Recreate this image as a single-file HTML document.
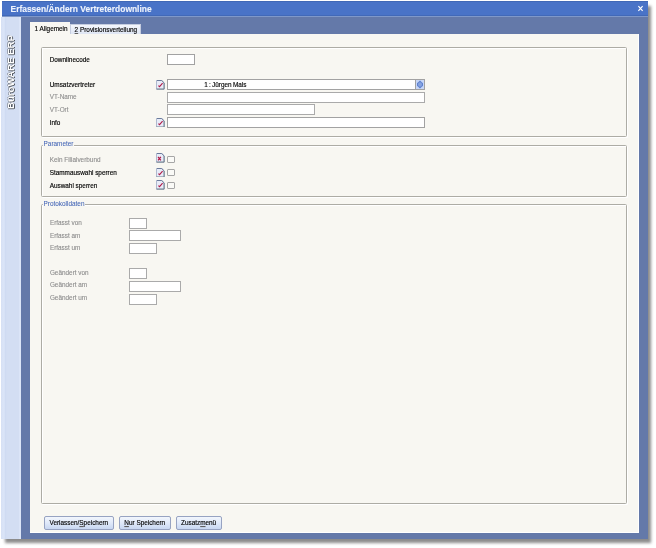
<!DOCTYPE html>
<html><head><meta charset="utf-8">
<style>
*{margin:0;padding:0;box-sizing:border-box}
html,body{width:656px;height:548px;overflow:hidden;background:#fff;position:relative}
body{font-family:"Liberation Sans",sans-serif}
#root{position:absolute;left:0;top:0;width:656px;height:548px;background:#fff;filter:blur(0.42px)}
.a{position:absolute}
.t{position:absolute;font-size:6.4px;line-height:6.4px;white-space:nowrap;color:#000;-webkit-text-stroke:0.14px currentColor;transform:scaleY(1.07);transform-origin:0 5.42px}
.g{color:#8c8c8c;-webkit-text-stroke:0.1px currentColor}
.shadow{position:absolute;left:4.5px;top:5.5px;width:646px;height:537px;background:#8c8c8c;filter:blur(1.5px)}
.win{position:absolute;left:2px;top:1.4px;width:645.6px;height:538px;background:#6479a9}
.title{position:absolute;left:2px;top:1.4px;width:645.6px;height:14.6px;background:#4973c7;border-top:1px solid #4068b6;border-bottom:1px solid #4169b8}
.tline{position:absolute;left:2px;top:16px;width:645.6px;height:1px;background:#7f98c9}
.side{position:absolute;left:1px;top:17px;width:19.7px;height:522px;background:linear-gradient(90deg,#d6e0f4 0,#dbe5f8 3px,#cfdbf2 4.5px,#d3def3 6px,#d3def3 17.5px,#dfe8f9 19px,#d9e3f6 19.7px)}
.body{position:absolute;left:29.7px;top:34px;width:609px;height:499px;background:#f8f7f2;border-right:1px solid #fff;border-bottom:1px solid #fff}
.grp{position:absolute;border:1px solid #adaca5;border-radius:1.5px;box-shadow:inset 1px 1px 0 #fff,1px 1px 0 #fff}
.inp{position:absolute;background:#fff;border:1px solid #a2a2a2}
.inpd{position:absolute;background:#fff;border:1px solid #aaaaaa}
.cb{position:absolute;width:7.5px;height:7px;border:1px solid #a6a6a6;border-radius:1px;background:#fafaf7}
.btn{position:absolute;top:515.5px;height:14px;border:1px solid #97a3c2;border-radius:2px;background:linear-gradient(#f2f6fd,#e0e9f9 50%,#c8d7f1)}
u{text-decoration-color:#5a5a5a}
.ico{position:absolute;width:8.6px;height:9.6px}
</style></head><body><div id="root">
<div class="shadow"></div>
<div class="win"></div>
<div class="title"></div>
<div class="tline"></div>
<div class="side"></div>
<div class="a" style="left:6.1px;top:108.5px;width:80px;height:9px;transform-origin:0 0;transform:rotate(-90deg) scale(1.005,0.97);font-size:9.6px;line-height:9px;font-weight:bold;color:#fff;white-space:nowrap;text-shadow:-0.5px 1px 0.2px #50565f,-1px 0.6px 0.4px #7a808c,0.4px -0.4px 0.3px #9aa0ac">BüroWARE ERP</div>
<div class="t" style="left:10.5px;top:5.3px;font-size:8.45px;line-height:8.45px;font-weight:bold;color:#eef3fc;-webkit-text-stroke:0.12px currentColor;transform:scaleY(1.06);transform-origin:0 100%">Erfassen/Ändern Vertreterdownline</div>
<svg class="a" style="left:637px;top:5px;width:7px;height:7px" viewBox="0 0 7 7"><path d="M1.4 1.2L5.6 5.8M5.6 1.2L1.4 5.8" stroke="#fff" stroke-width="1.2"/></svg>

<!-- tabs -->
<div class="a" style="left:29.7px;top:22px;width:40.3px;height:13px;background:#f8f7f2"></div>
<div class="a" style="left:70px;top:23.5px;width:71px;height:10.5px;background:linear-gradient(#f4f7fd,#dfe6f4);border:1px solid #c5cde0;border-bottom:none"></div>
<div class="t" style="left:34.5px;top:26px">1 Allgemein</div>
<div class="t" style="left:74.6px;top:26.7px"><u>2</u> Provisionsverteilung</div>

<div class="body"></div>

<!-- group 1 -->
<div class="grp" style="left:41px;top:47px;width:586px;height:90px"></div>
<div class="t" style="left:49.7px;top:56.8px">Downlinecode</div>
<div class="inp" style="left:167px;top:54px;width:28px;height:11px"></div>
<div class="t" style="left:49.7px;top:82.1px">Umsatzvertreter</div>
<div class="inp" style="left:167px;top:79px;width:258px;height:11px"></div>
<div class="a" style="left:415px;top:79px;width:10px;height:11px;border:1px solid #a2a2a2;background:#c8d7f7"></div>
<svg class="a" style="left:416px;top:80px;width:8px;height:9px" viewBox="0 0 8 9"><path d="M4 0.6L7 3.2V5.8L4 8.4L1 5.8V3.2Z" fill="#5d80cf"/><ellipse cx="4" cy="4.5" rx="2" ry="2.2" fill="#86a3e0"/></svg>
<div class="t" style="left:204.2px;top:81.9px;word-spacing:-0.5px">1 : Jürgen Mals</div>
<div class="t g" style="left:49.7px;top:93.5px">VT-Name</div>
<div class="inpd" style="left:167px;top:92px;width:258px;height:10.5px"></div>
<div class="t g" style="left:49.7px;top:107px">VT-Ort</div>
<div class="inpd" style="left:167px;top:104px;width:148px;height:11px"></div>
<div class="t" style="left:49.7px;top:120px">Info</div>
<div class="inp" style="left:167px;top:117px;width:258px;height:11px"></div>

<!-- parameter -->
<div class="grp" style="left:41px;top:145px;width:586px;height:52px"></div>
<div class="a" style="left:43px;top:141px;width:30.5px;height:6px;background:#f8f7f2"></div>
<div class="t" style="left:43.6px;top:141.2px;color:#4466b6;-webkit-text-stroke:0.06px currentColor">Parameter</div>
<div class="t g" style="left:49.7px;top:157px">Kein Filialverbund</div>
<div class="t" style="left:49.7px;top:170.1px">Stammauswahl sperren</div>
<div class="t" style="left:49.7px;top:182.7px">Auswahl sperren</div>
<div class="cb" style="left:167px;top:156px"></div>
<div class="cb" style="left:167px;top:169px"></div>
<div class="cb" style="left:167px;top:181.5px"></div>

<!-- protokoll -->
<div class="grp" style="left:41px;top:204px;width:586px;height:300px"></div>
<div class="a" style="left:43px;top:200px;width:42px;height:6px;background:#f8f7f2"></div>
<div class="t" style="left:43.6px;top:201.4px;color:#4466b6;-webkit-text-stroke:0.06px currentColor">Protokolldaten</div>
<div class="t g" style="left:49.9px;top:219.6px">Erfasst von</div>
<div class="t g" style="left:49.9px;top:232.7px">Erfasst am</div>
<div class="t g" style="left:49.9px;top:244.5px">Erfasst um</div>
<div class="t g" style="left:49.9px;top:269.7px">Geändert von</div>
<div class="t g" style="left:49.9px;top:282px">Geändert am</div>
<div class="t g" style="left:49.9px;top:294.9px">Geändert um</div>
<div class="inpd" style="left:129px;top:217.5px;width:18px;height:11px"></div>
<div class="inpd" style="left:129px;top:230px;width:52px;height:11px"></div>
<div class="inpd" style="left:129px;top:243px;width:28px;height:11px"></div>
<div class="inpd" style="left:129px;top:268px;width:18px;height:11px"></div>
<div class="inpd" style="left:129px;top:280.5px;width:52px;height:11px"></div>
<div class="inpd" style="left:129px;top:293.5px;width:28px;height:11px"></div>

<!-- icons -->
<svg class="ico" style="left:156px;top:80px" viewBox="0 0 9 10"><path d="M0.5 0.5H6L8.5 3V9.5H0.5Z" fill="#e8ecf8" stroke="#aab4cc" stroke-width="1"/><path d="M0.5 9.5H8.5V3" fill="none" stroke="#6a7a88" stroke-width="1"/><path d="M1 0.5H6L8.5 3" fill="none" stroke="#687898" stroke-width="1"/><path d="M2.5 5.9L3.7 7L6.9 3.2" fill="none" stroke="#b01c48" stroke-width="1.15"/></svg>
<svg class="ico" style="left:156px;top:117.5px" viewBox="0 0 9 10"><path d="M0.5 0.5H6L8.5 3V9.5H0.5Z" fill="#e8ecf8" stroke="#aab4cc" stroke-width="1"/><path d="M0.5 9.5H8.5V3" fill="none" stroke="#6a7a88" stroke-width="1"/><path d="M1 0.5H6L8.5 3" fill="none" stroke="#687898" stroke-width="1"/><path d="M2.5 5.9L3.7 7L6.9 3.2" fill="none" stroke="#b01c48" stroke-width="1.15"/></svg>
<svg class="ico" style="left:156px;top:153.3px" viewBox="0 0 9 10"><path d="M0.5 0.5H6L8.5 3V9.5H0.5Z" fill="#e8ecf8" stroke="#aab4cc" stroke-width="1"/><path d="M0.5 9.5H8.5V3" fill="none" stroke="#6a7a88" stroke-width="1"/><path d="M1 0.5H6L8.5 3" fill="none" stroke="#687898" stroke-width="1"/><path d="M2.1 4.1L5.1 7.7M5.1 4.1L2.1 7.7" fill="none" stroke="#b01846" stroke-width="1.3"/></svg>
<svg class="ico" style="left:156px;top:167.6px" viewBox="0 0 9 10"><path d="M0.5 0.5H6L8.5 3V9.5H0.5Z" fill="#e8ecf8" stroke="#aab4cc" stroke-width="1"/><path d="M0.5 9.5H8.5V3" fill="none" stroke="#6a7a88" stroke-width="1"/><path d="M1 0.5H6L8.5 3" fill="none" stroke="#687898" stroke-width="1"/><path d="M2.5 5.9L3.7 7L6.9 3.2" fill="none" stroke="#b01c48" stroke-width="1.15"/></svg>
<svg class="ico" style="left:156px;top:180.3px" viewBox="0 0 9 10"><path d="M0.5 0.5H6L8.5 3V9.5H0.5Z" fill="#e8ecf8" stroke="#aab4cc" stroke-width="1"/><path d="M0.5 9.5H8.5V3" fill="none" stroke="#6a7a88" stroke-width="1"/><path d="M1 0.5H6L8.5 3" fill="none" stroke="#687898" stroke-width="1"/><path d="M2.5 5.9L3.7 7L6.9 3.2" fill="none" stroke="#b01c48" stroke-width="1.15"/></svg>

<!-- buttons -->
<div class="btn" style="left:44px;width:70px"></div>
<div class="btn" style="left:119px;width:52px"></div>
<div class="btn" style="left:176px;width:46px"></div>
<div class="t" style="left:49.5px;top:519.5px">Verlassen/<u>S</u>peichern</div>
<div class="t" style="left:124.3px;top:519.5px"><u>N</u>ur Speichern</div>
<div class="t" style="left:181px;top:519.5px">Zusatz<u>m</u>enü</div>

</div></body></html>
